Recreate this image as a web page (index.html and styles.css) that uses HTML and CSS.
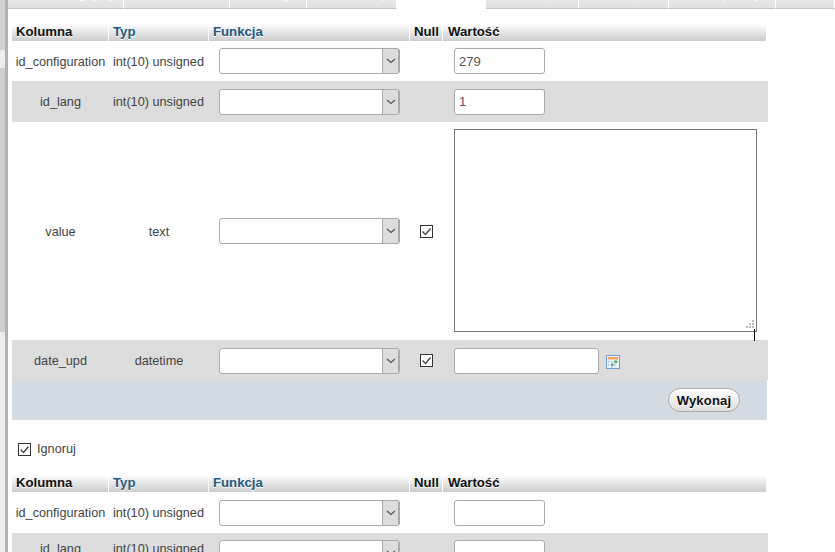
FILE: index.html
```html
<!DOCTYPE html>
<html lang="pl">
<head>
<meta charset="utf-8">
<title>Wstaw</title>
<link rel="stylesheet" href="styles.css">
</head>
<body>
<div class="page">
  <div class="gutter"><div class="g1"></div><div class="g2"></div><div class="g3"></div><div class="g4"></div></div>
  <div class="rail"></div>
  <main class="main">
    <nav class="tabs">
      <div class="tab t1"><span>Przeglądaj</span></div>
      <div class="tab t2"><span>Struktura</span></div>
      <div class="tab t3"><span>SQL</span></div>
      <div class="tab t4"><span>Szukaj</span></div>
      <div class="tab t5 active"><span>Wstaw</span></div>
      <div class="tab t6"><span>Eksport</span></div>
      <div class="tab t7"><span>Import</span></div>
      <div class="tab t8"><span>Operacje</span></div>
      <div class="tab t9"><span>Śledzenie</span></div>
    </nav>

    <div class="grid">
      <div class="th">Kolumna</div><div class="th link">Typ</div><div class="th link">Funkcja</div><div class="th c">Null</div><div class="th last">Wartość</div>

      <div class="cell name h40 nudge">id_configuration</div><div class="cell type h40 nudge">int(10) unsigned</div>
      <div class="cell fn h40"><div class="sel"><span class="sel-body"></span><span class="sel-arrow"><svg width="10" height="6" viewBox="0 0 10 6"><path d="M1 1l4 3.5L9 1" fill="none" stroke="#555" stroke-width="1.2"/></svg></span></div></div>
      <div class="cell h40"></div>
      <div class="cell val h40"><input class="inp" value="279"></div>

      <div class="cell name odd h41">id_lang</div><div class="cell type odd h41">int(10) unsigned</div>
      <div class="cell fn odd h41"><div class="sel"><span class="sel-body"></span><span class="sel-arrow"><svg width="10" height="6" viewBox="0 0 10 6"><path d="M1 1l4 3.5L9 1" fill="none" stroke="#555" stroke-width="1.2"/></svg></span></div></div>
      <div class="cell odd h41"></div>
      <div class="cell val odd h41"><input class="inp plum" value="1"></div>

      <div class="cell name h218 nudge">value</div><div class="cell type ctr h218 nudge">text</div>
      <div class="cell fn h218"><div class="sel"><span class="sel-body"></span><span class="sel-arrow"><svg width="10" height="6" viewBox="0 0 10 6"><path d="M1 1l4 3.5L9 1" fill="none" stroke="#555" stroke-width="1.2"/></svg></span></div></div>
      <div class="cell ctr h218"><span class="cb"><svg width="13" height="13" viewBox="0 0 13 13"><path d="M2.5 6.5l3 3 5-6" fill="none" stroke="#444" stroke-width="1.3"/></svg></span></div>
      <div class="cell val top h218"><div class="ta-wrap"><textarea class="ta"></textarea><svg class="grip" width="11" height="11" viewBox="0 0 11 11"><path d="M7 0h2v2H7zM4 3h2v2H4zM7 3h2v2H7zM1 6h2v2H1zM4 6h2v2H4zM7 6h2v2H7z" fill="#bbb"/></svg><span class="caret"></span></div></div>

      <div class="cell name odd h40 nudge">date_upd</div><div class="cell type ctr odd h40 nudge">datetime</div>
      <div class="cell fn odd h40 nudge"><div class="sel"><span class="sel-body"></span><span class="sel-arrow"><svg width="10" height="6" viewBox="0 0 10 6"><path d="M1 1l4 3.5L9 1" fill="none" stroke="#555" stroke-width="1.2"/></svg></span></div></div>
      <div class="cell ctr odd h40 nudge"><span class="cb"><svg width="13" height="13" viewBox="0 0 13 13"><path d="M2.5 6.5l3 3 5-6" fill="none" stroke="#444" stroke-width="1.3"/></svg></span></div>
      <div class="cell val odd h40 dt nudge"><input class="inp wide"><svg class="cal" width="14" height="14" viewBox="0 0 14 14"><rect x=".5" y=".5" width="13" height="13" fill="#eef4fb" stroke="#6f9fd8"/><rect x="2" y="2" width="10" height="2.5" fill="#f6a356"/><path d="M2 6h1.5v1.5H2zM5 6h1.500v1.500H5zM2 9h1.500v1.500H2zM8 9h1.500v1.500H8zM5 11.500h1.500V13H5z" fill="#a9c3e3"/><rect x="5" y="8.500" width="2.500" height="2.500" fill="#5fb35f"/><rect x="8" y="5.500" width="3.500" height="2.500" fill="#5fb35f"/></svg></div>

      <div class="actions"><button class="btn" type="button">Wykonaj</button></div>
    </div>

    <label class="ignore"><span class="cb"><svg width="13" height="13" viewBox="0 0 13 13"><path d="M2.500 6.500l3 3 5-6" fill="none" stroke="#444" stroke-width="1.300"/></svg></span><span>Ignoruj</span></label>

    <div class="grid">
      <div class="th">Kolumna</div><div class="th link">Typ</div><div class="th link">Funkcja</div><div class="th c">Null</div><div class="th last">Wartość</div>

      <div class="cell name h41">id_configuration</div><div class="cell type h41">int(10) unsigned</div>
      <div class="cell fn h41"><div class="sel"><span class="sel-body"></span><span class="sel-arrow"><svg width="10" height="6" viewBox="0 0 10 6"><path d="M1 1l4 3.500L9 1" fill="none" stroke="#555" stroke-width="1.200"/></svg></span></div></div>
      <div class="cell h41"></div>
      <div class="cell val h41"><input class="inp"></div>

      <div class="cell name odd h41 low">id_lang</div><div class="cell type odd h41 low">int(10) unsigned</div>
      <div class="cell fn odd h41 low"><div class="sel"><span class="sel-body"></span><span class="sel-arrow"><svg width="10" height="6" viewBox="0 0 10 6"><path d="M1 1l4 3.500L9 1" fill="none" stroke="#555" stroke-width="1.200"/></svg></span></div></div>
      <div class="cell odd h41 low"></div>
      <div class="cell val odd h41 low"><input class="inp"></div>
    </div>
  </main>
</div>
</body>
</html>
```
FILE: styles.css
```css
* { box-sizing: border-box; }
html, body { margin: 0; height: 100%; overflow: hidden; background: #fff; }
body { font-family: "Liberation Sans", Arial, sans-serif; font-size: 12.7px; color: #444; }
.page { display: flex; height: 552px; overflow: hidden; }

.gutter { width: 5px; display: flex; flex-direction: column; flex: none; }
.g1 { height: 50px; background: #d4d4d4; }
.g2 { height: 18px; background: #eee; }
.g3 { height: 264px; background: #cfcfcf; }
.g4 { flex: 1; background: #eee; }
.rail { width: 3px; flex: none; background: #b2b2b2; }

.main { flex: 1; min-width: 0; }

.tabs { display: flex; height: 9px; overflow: hidden; }
.tab { height: 9px; display: flex; align-items: flex-end; justify-content: flex-end; padding-right: 10px; background: linear-gradient(#e8e8e8, #e0e0e0); border-right: 1px solid #fff; border-bottom: 1px solid #c4c4c4; font-size: 13px; color: #fff; flex: none; overflow: hidden; white-space: nowrap; }
.tab span { line-height: 14px; margin-bottom: 7px; }
.t1 { width: 116px; } .t2 { width: 106px; } .t3 { width: 77px; } .t4 { width: 90px; margin-right: 1px; }
.t5 { width: 88px; }
.t6 { width: 93px; } .t7 { width: 90px; } .t8 { width: 107px; } .t9 { flex: 1; }
.tabs .active { background: #fff; border: 0; color: #fff; }

.grid { display: grid; grid-template-columns: 97px 100px 201px 33px 325px; margin-left: 4px; width: 756px; }
.grid { margin-top: 15px; }
.th { height: 17px; line-height: 15px; padding-left: 4px; font-weight: 700; font-size: 13.2px; color: #111; background: linear-gradient(#fff, #ccc); border-right: 1px solid #fff; text-shadow: 0 1px 0 #fff; }
.th.last { border-right: 0; width: 323px; padding-left: 5px; }
.th.link { color: #235a81; }

.cell { display: flex; align-items: center; }
.h40 { height: 40px; } .h41 { height: 41px; } .h218 { height: 218px; }
.odd { background: #ddd; }
.name { justify-content: center; }
.type { padding-left: 4px; }
.type.ctr { justify-content: center; padding-left: 0; }
.ctr { justify-content: center; }
.fn { padding-left: 10px; }
.val { padding-left: 11px; }
.top { align-items: flex-start; padding-top: 7px; }
.nudge { padding-top: 1px; }
.low { align-items: flex-start; padding-top: 7px; }
.name.low, .type.low { padding-top: 9px; }

.sel { width: 181px; height: 26px; display: flex; border: 1px solid #aaa; border-radius: 3px; background: #fff; }
.sel-body { flex: 1; }
.sel-arrow { width: 17px; background: #ddd; border-left: 1px solid #aaa; border-right: 1px solid #aaa; display: flex; align-items: center; justify-content: center; }

.inp { width: 91px; height: 26px; border: 1px solid #aaa; border-radius: 3px; padding: 0 4px; font: 13px "Liberation Sans", Arial, sans-serif; color: #555; background: #fff; outline: 0; }
.inp.plum { color: #6b4a66; }
.inp.wide { width: 145px; }
.dt { gap: 7px; }
.cal { flex: none; margin-top: 3px; }

.cb { width: 13px; height: 13px; border: 1px solid #333; background: #fff; display: inline-flex; flex: none; position: relative; }
.cb svg { position: absolute; left: -1px; top: -1px; }

.ta-wrap { position: relative; width: 303px; height: 203px; }
.ta { display: block; width: 303px; height: 203px; border: 1px solid #777; padding: 2px; resize: none; background: #fff; outline: 0; }
.grip { position: absolute; right: 1px; bottom: 1px; }
.caret { position: absolute; left: 300px; top: 200px; width: 1px; height: 12px; background: #000; }

.actions { grid-column: 1 / -1; height: 40px; width: 755px; background: #d3dce3; display: flex; align-items: center; justify-content: flex-end; padding-right: 27px; }
.btn { width: 72px; height: 24px; padding: 0; border: 1px solid #aaa; border-radius: 12px; background: linear-gradient(#fff, #ddd); font: 700 13px "Liberation Sans", Arial, sans-serif; letter-spacing: .2px; color: #111; text-shadow: 0 1px 0 #fff; }

.ignore { display: flex; align-items: center; gap: 6px; margin: 22px 0 0 10px; height: 14px; color: #444; }
.ignore + .grid { margin-top: 19px; }
```
